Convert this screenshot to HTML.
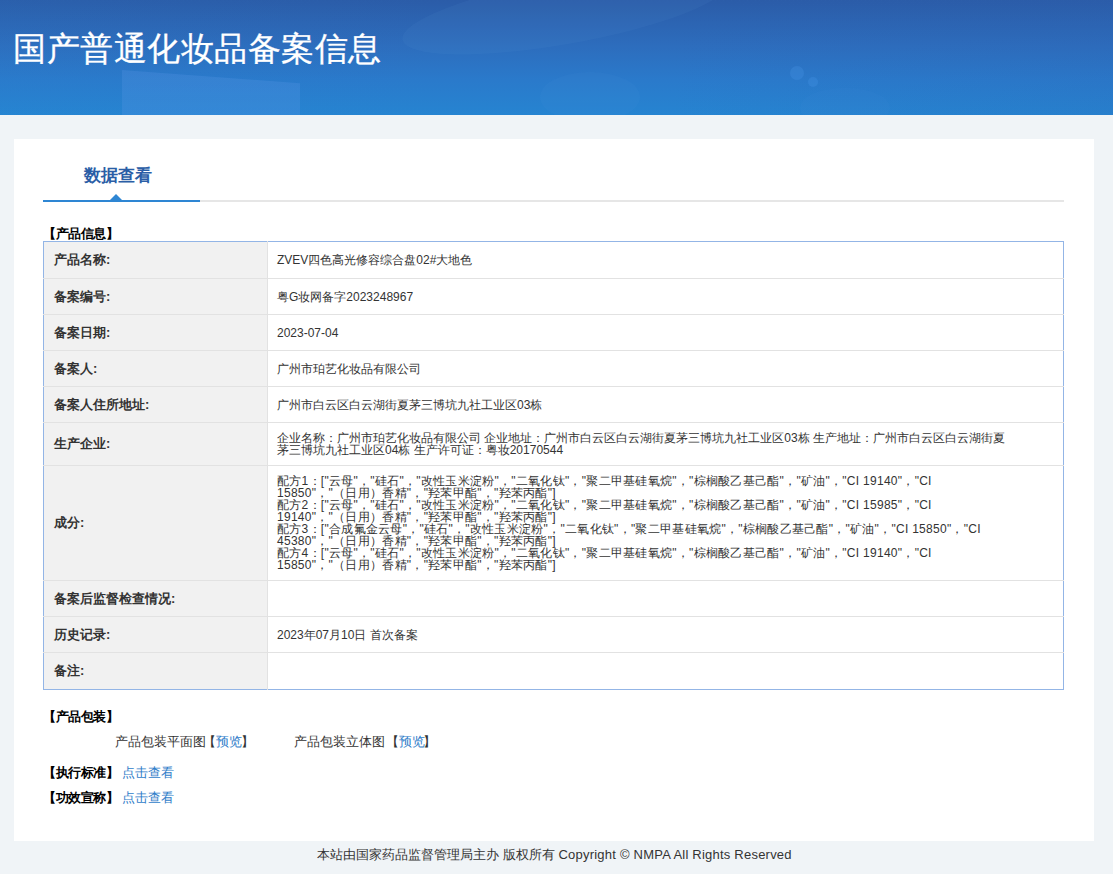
<!DOCTYPE html>
<html><head><meta charset="utf-8">
<style>
*{margin:0;padding:0;box-sizing:border-box}
html,body{width:1113px;height:874px;overflow:hidden;background:#f0f4f7;font-family:"Liberation Sans",sans-serif;color:#333}
.hd{position:absolute;left:0;top:0;width:1113px;height:115px;background:linear-gradient(180deg,#2b5ca8 0%,#2d6dbd 40%,#2a7acb 70%,#2684d1 100%);overflow:hidden}
.hd .sh{position:absolute}
.hd h1{position:absolute;left:13px;top:27px;font-size:33px;font-weight:normal;color:#fff;white-space:nowrap;letter-spacing:0.5px;-webkit-text-stroke:0.3px #fff}
.card{position:absolute;left:14px;top:139px;width:1080px;height:702px;background:#fff}
.tab{position:absolute;left:70px;top:25px;font-size:17px;font-weight:bold;color:#2b5ea6}
.tabline{position:absolute;left:29px;top:61px;width:1021px;height:2px;background:#e6e6e6}
.tri{position:absolute;left:96px;top:55px;width:0;height:0;border-left:6px solid transparent;border-right:6px solid transparent;border-bottom:6px solid #2e86d3}
.tabact{position:absolute;left:29px;top:61px;width:157px;height:2px;background:#2e86d3}
.sec{position:absolute;font-size:13px;font-weight:bold;color:#000;white-space:nowrap;letter-spacing:-0.5px}
table{position:absolute;left:29px;top:102px;width:1021px;border-collapse:collapse;border:1px solid #93b5e6;font-size:12px}
td{border-bottom:1px solid #e2e2e2;vertical-align:middle;color:#333}
tr:last-child td{border-bottom:0}
td.l{width:224px;background:#f1f1f1;border-right:1px solid #e2e2e2;font-weight:bold;padding-left:10px;font-size:13px;color:#333}
td.v{padding-left:9px;line-height:12px}
.lnk{color:#2f7dc9}
.ft{position:absolute;left:-2px;top:846px;width:1113px;text-align:center;font-size:13px;color:#333}
</style></head><body>
<div class="hd"><div class="sh" style="left:122px;top:70px;width:178px;height:60px;background:rgba(90,150,230,.28);clip-path:polygon(0 0,100% 22%,100% 100%,0 100%)"></div><div class="sh" style="left:400px;top:-22px;width:330px;height:66px;border-radius:50%;background:rgba(120,170,230,.07);transform:rotate(-10deg)"></div><div class="sh" style="left:540px;top:72px;width:100px;height:50px;border-radius:50%;background:rgba(90,160,230,.07)"></div><div class="sh" style="left:800px;top:88px;width:90px;height:40px;border-radius:50%;background:rgba(90,160,230,.05)"></div><div class="sh" style="left:0;top:0;width:1113px;height:115px;background:linear-gradient(90deg,rgba(40,140,215,.08) 0%,rgba(40,140,215,0) 40%,rgba(45,95,175,0) 60%,rgba(45,95,175,.14) 100%)"></div><div class="sh" style="left:790px;top:66px;width:14px;height:14px;border-radius:50%;background:rgba(80,160,240,.22)"></div><div class="sh" style="left:808px;top:77px;width:10px;height:10px;border-radius:50%;background:rgba(80,160,240,.22)"></div><h1>国产普通化妆品备案信息</h1></div>
<div class="card">
  <div class="tab">数据查看</div>
  <div class="tabline"></div>
  <div class="tabact"></div><div class="tri"></div>
  <div class="sec" style="left:29px;top:86px">【产品信息】</div>
  <table>
    <tr style="height:37px"><td class="l">产品名称:</td><td class="v">ZVEV四色高光修容综合盘02#大地色</td></tr>
    <tr style="height:36px"><td class="l">备案编号:</td><td class="v">粤G妆网备字2023248967</td></tr>
    <tr style="height:36px"><td class="l">备案日期:</td><td class="v">2023-07-04</td></tr>
    <tr style="height:36px"><td class="l">备案人:</td><td class="v">广州市珀艺化妆品有限公司</td></tr>
    <tr style="height:36px"><td class="l">备案人住所地址:</td><td class="v">广州市白云区白云湖街夏茅三博坑九社工业区03栋</td></tr>
    <tr style="height:43px"><td class="l">生产企业:</td><td class="v">企业名称：广州市珀艺化妆品有限公司 企业地址：广州市白云区白云湖街夏茅三博坑九社工业区03栋 生产地址：广州市白云区白云湖街夏<br>茅三博坑九社工业区04栋 生产许可证：粤妆20170544</td></tr>
    <tr style="height:115px"><td class="l">成分:</td><td class="v" style="letter-spacing:0.28px">配方1：["云母"，"硅石"，"改性玉米淀粉"，"二氧化钛"，"聚二甲基硅氧烷"，"棕榈酸乙基己酯"，"矿油"，"CI 19140"，"CI<br>15850"，"（日用）香精"，"羟苯甲酯"，"羟苯丙酯"]<br>配方2：["云母"，"硅石"，"改性玉米淀粉"，"二氧化钛"，"聚二甲基硅氧烷"，"棕榈酸乙基己酯"，"矿油"，"CI 15985"，"CI<br>19140"，"（日用）香精"，"羟苯甲酯"，"羟苯丙酯"]<br>配方3：["合成氟金云母"，"硅石"，"改性玉米淀粉"，"二氧化钛"，"聚二甲基硅氧烷"，"棕榈酸乙基己酯"，"矿油"，"CI 15850"，"CI<br>45380"，"（日用）香精"，"羟苯甲酯"，"羟苯丙酯"]<br>配方4：["云母"，"硅石"，"改性玉米淀粉"，"二氧化钛"，"聚二甲基硅氧烷"，"棕榈酸乙基己酯"，"矿油"，"CI 19140"，"CI<br>15850"，"（日用）香精"，"羟苯甲酯"，"羟苯丙酯"]</td></tr>
    <tr style="height:36px"><td class="l">备案后监督检查情况:</td><td class="v"></td></tr>
    <tr style="height:36px"><td class="l">历史记录:</td><td class="v">2023年07月10日 首次备案</td></tr>
    <tr style="height:37px"><td class="l">备注:</td><td class="v"></td></tr>
  </table>
  <div class="sec" style="left:29px;top:569px">【产品包装】</div>
  <div style="position:absolute;left:101px;top:594px;font-size:13px;white-space:nowrap">产品包装平面图<span style="margin-left:-3px">【</span><span class="lnk">预览</span><span style="margin-left:-1.5px">】</span></div>
  <div style="position:absolute;left:280px;top:594px;font-size:13px;white-space:nowrap">产品包装立体图 <span style="margin-left:-3px">【</span><span class="lnk">预览</span><span style="margin-left:-1.5px">】</span></div>
  <div class="sec" style="left:29px;top:625px">【执行标准】 <span class="lnk" style="font-weight:normal;letter-spacing:0;margin-left:1px">点击查看</span></div>
  <div class="sec" style="left:29px;top:650px">【功效宣称】 <span class="lnk" style="font-weight:normal;letter-spacing:0;margin-left:1px">点击查看</span></div>
</div>
<div class="ft">本站由国家药品监督管理局主办 版权所有 <span style="letter-spacing:0.22px">Copyright © NMPA All Rights Reserved</span></div>
</body></html>
